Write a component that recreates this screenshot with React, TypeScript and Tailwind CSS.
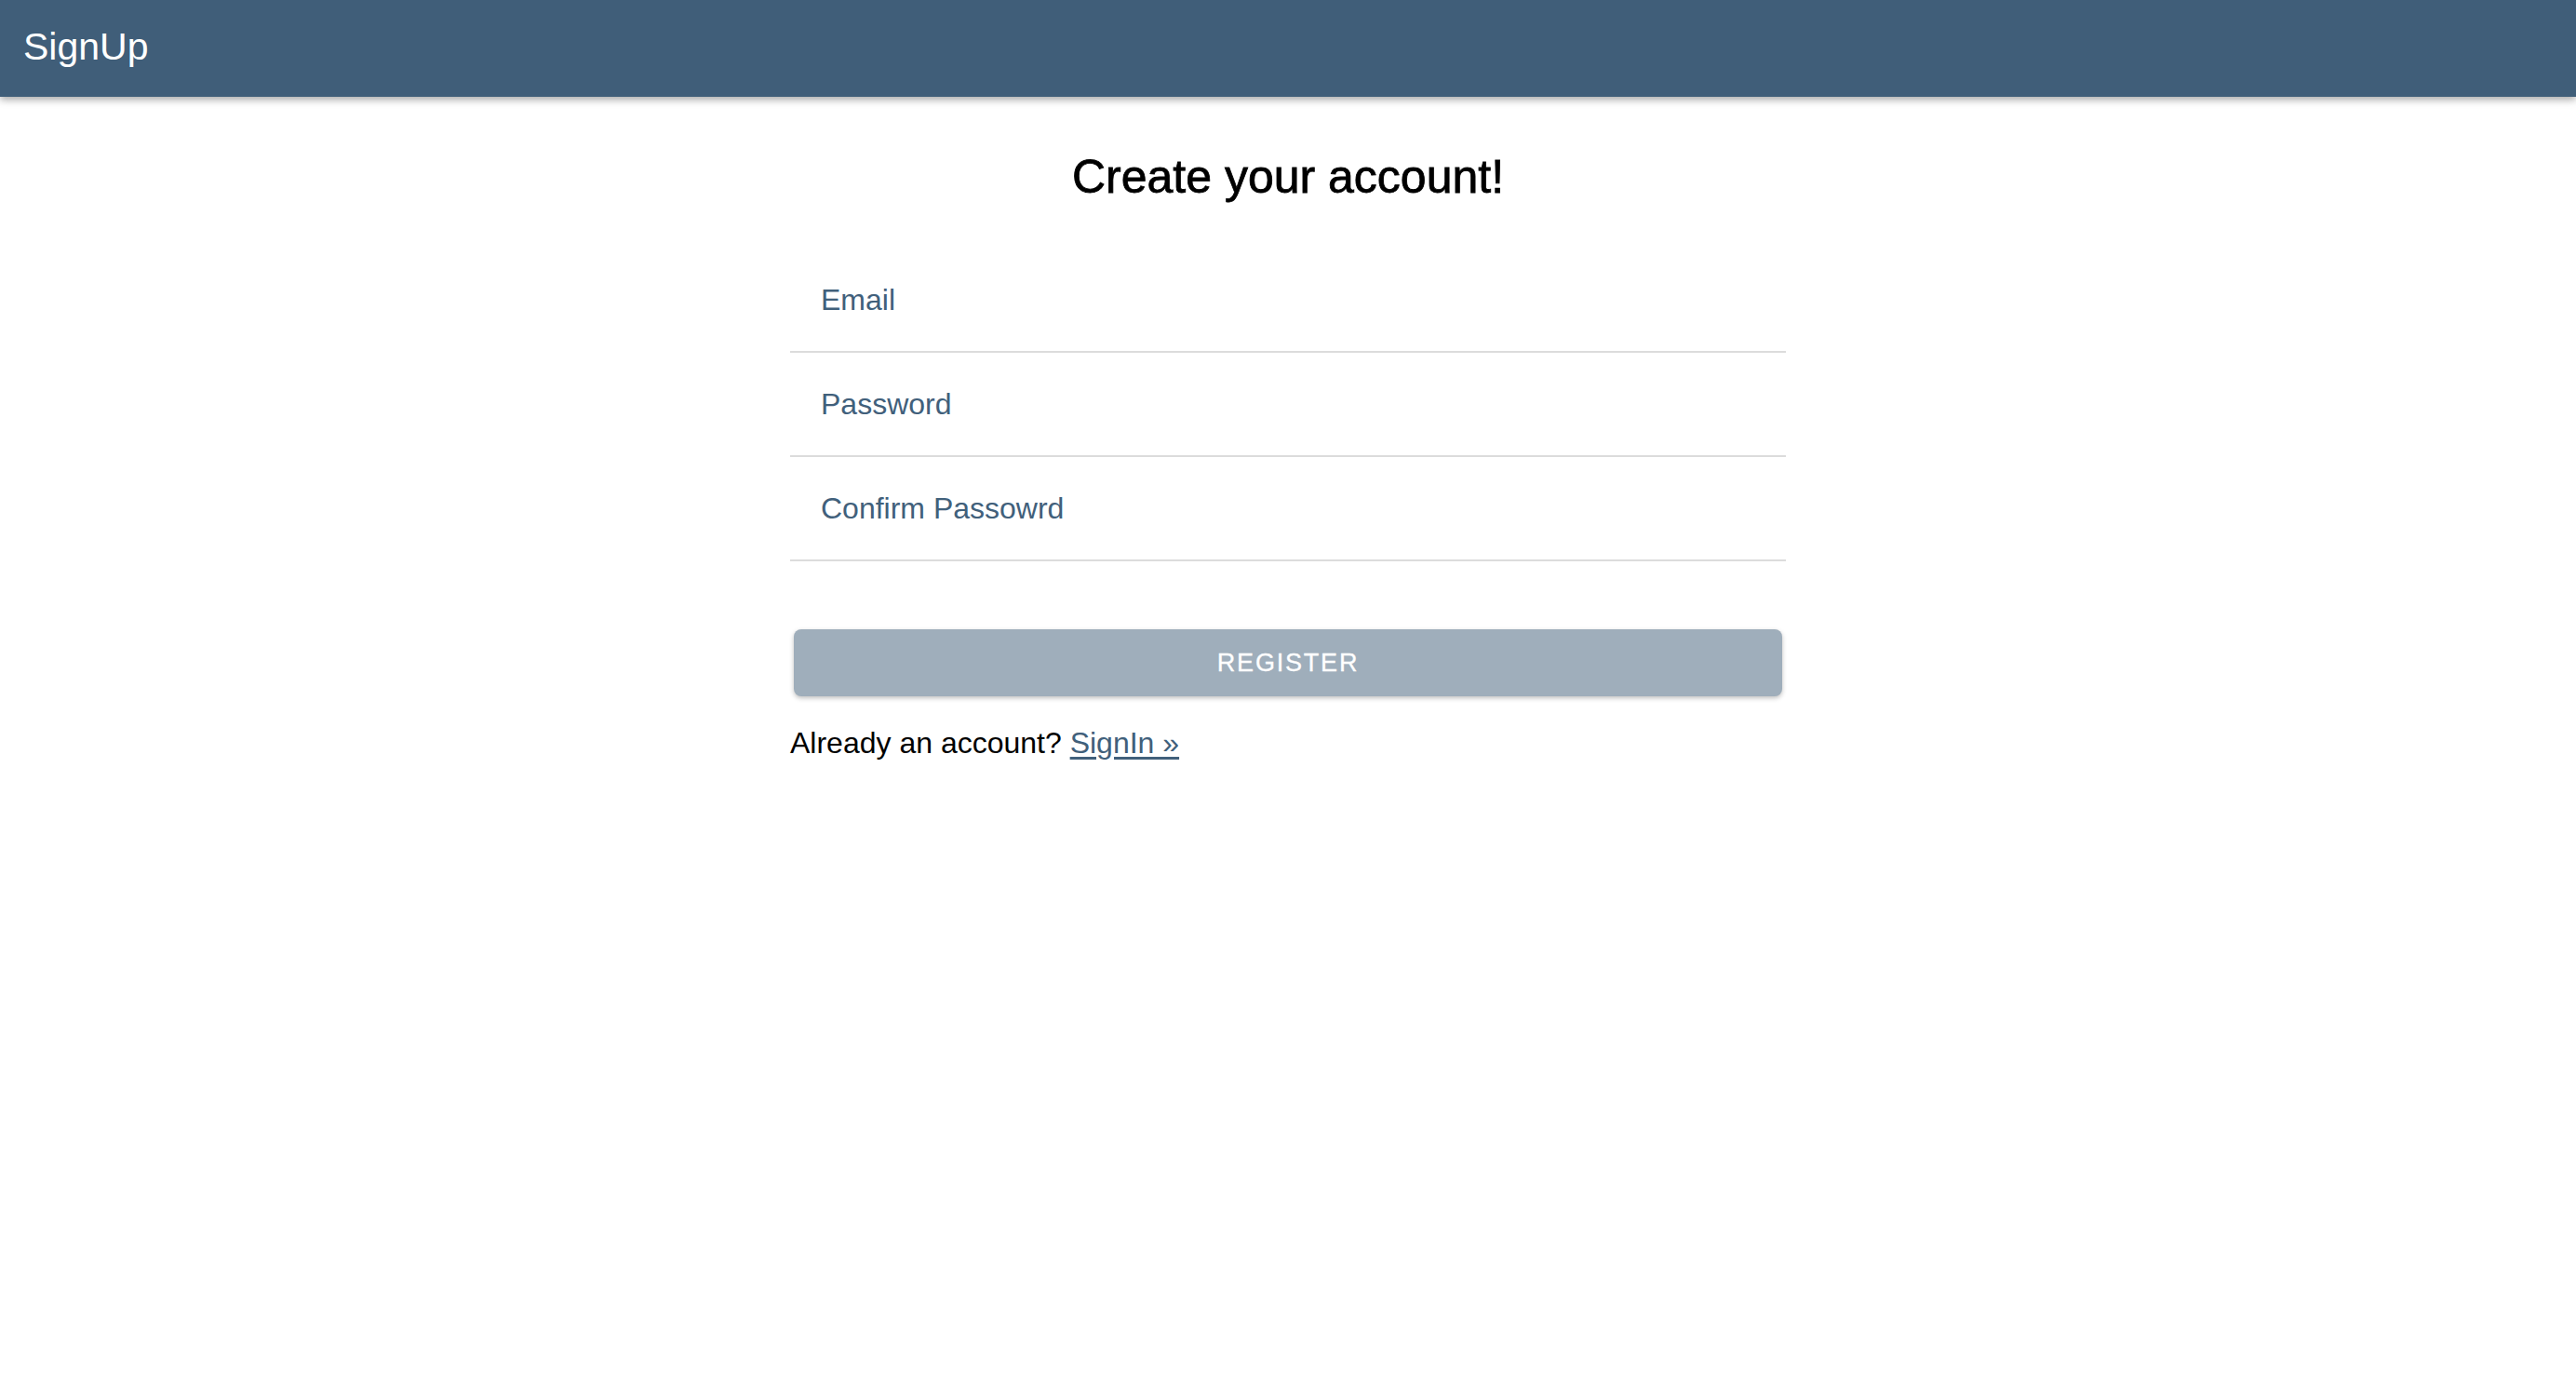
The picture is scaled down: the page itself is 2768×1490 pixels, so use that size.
import React from "react";

const font = { fontFamily: '"Liberation Sans", Arial, Helvetica, sans-serif' };

function Field({ label }: { label: string }) {
  return (
    <div className="h-[112px] border-b-2 border-[#dcdcdc] flex items-center pl-[33px]">
      <input
        placeholder={label}
        className="w-full bg-transparent outline-none text-[32px] text-[#41607b] placeholder:text-[#41607b]"
        style={font}
      />
    </div>
  );
}

export default function App() {
  return (
    <div className="min-h-screen bg-white" style={font}>
      <header className="h-[104px] bg-[#405e79] flex items-center pl-[25px] shadow-[0_3px_8px_rgba(0,0,0,0.35)] relative">
        <span className="text-white text-[41px] leading-none -mt-[4px]">SignUp</span>
      </header>
      <main className="w-[1070px] mx-auto flex flex-col">
        <h1 className="text-center text-[50px] leading-none text-black mt-[61px]" style={{ ...font, fontWeight: 500, WebkitTextStroke: "0.8px black" }}>
          Create your account!
        </h1>
        <form className="flex flex-col mt-[52px]">
          <Field label="Email" />
          <Field label="Password" />
          <Field label="Confirm Passowrd" />
          <button
            type="button"
            className="mt-[73px] mx-[4px] h-[72px] rounded-[8px] bg-[#9faebb] text-white text-[27px] tracking-[1.8px] shadow-[0_2px_5px_rgba(0,0,0,0.25)]"
            style={{ ...font, WebkitTextStroke: "0.3px white" }}
          >
            REGISTER
          </button>
        </form>
        <p className="mt-[34px] text-[32px] text-black leading-none">
          Already an account?{" "}
          <a href="#" className="text-[#41607b] underline underline-offset-[4px]">
            SignIn »
          </a>
        </p>
      </main>
    </div>
  );
}
